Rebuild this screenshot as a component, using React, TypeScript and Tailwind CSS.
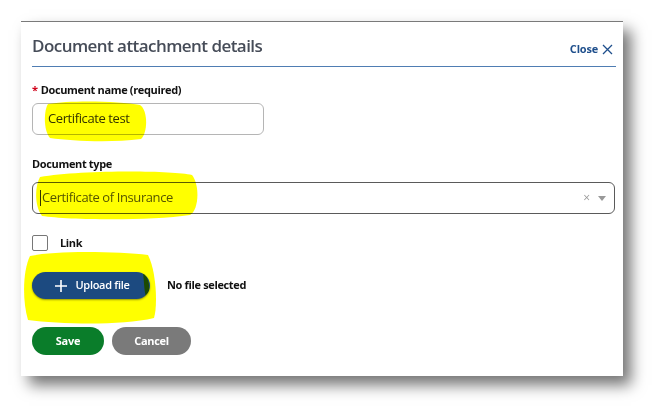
import React from "react";

export default function App() {
  const font = { fontFamily: '"Open Sans", "Liberation Sans", sans-serif' };
  return (
    <div className="relative w-[665px] h-[419px] bg-white overflow-hidden pt-[21px] pl-[21px]" style={font}>
      <div className="w-[602px] h-[355px] bg-white border-t border-[#7a7a7a] shadow-[8px_9px_14px_rgba(0,0,0,0.55)] pl-[11px] pr-[7px]">
        <div className="flex items-center justify-between h-[45px] border-b border-[#4f7db3] pt-[4px]">
          <h1 className="text-[17px] font-semibold text-[#464c58] tracking-[-0.55px]">Document attachment details</h1>
          <button className="flex items-center gap-[4px] text-[11px] font-bold text-[#1f4f8c] tracking-[-0.2px] pr-[3px] pt-[6px]">
            Close
            <svg width="11" height="11" viewBox="0 0 11 11" className="stroke-[#1f4f8c]" fill="none">
              <path d="M1 1L10 10M10 1L1 10" strokeWidth="1.3" />
            </svg>
          </button>
        </div>

        <div className="mt-[15px] flex items-center h-[16px] text-[11px] font-bold text-[#111] tracking-[-0.35px]">
          <span className="text-[#d0021b] mr-[3px]">*</span>
          Document name (required)
        </div>
        <div className="mt-[5px] w-[232px] h-[32px] border border-[#b5b5b5] rounded-[6px] flex items-center pl-[15px] text-[13px] text-[#333] tracking-[-0.4px]">
          Certificate test
        </div>

        <div className="mt-[21px] flex items-center h-[16px] text-[11px] font-bold text-[#111] tracking-[-0.35px]">Document type</div>
        <div className="mt-[10px] w-[583px] h-[32px] border-[1.5px] border-[#5a5a5a] rounded-[6px] flex items-center pl-[7px] pr-[8px]">
          <span className="w-px h-[16px] bg-[#333] mr-[1px]"></span>
          <span className="flex-1 text-[13px] text-[#555] tracking-[-0.4px]">Certificate of Insurance</span>
          <span className="text-[12px] text-[#999] mr-[8px] leading-none">×</span>
          <svg width="8" height="5" viewBox="0 0 8 5"><path d="M0 0H8L4 5Z" fill="#999" /></svg>
        </div>

        <div className="mt-[21px] flex items-center h-[16px]">
          <span className="w-[16px] h-[16px] border border-[#777] rounded-[2px]"></span>
          <span className="ml-[12px] text-[11px] font-bold text-[#111] tracking-[-0.35px]">Link</span>
        </div>

        <div className="mt-[21px] flex items-center">
          <button className="relative z-10 w-[118px] h-[27px] rounded-full bg-[#1c4a80] text-white text-[11px] font-semibold tracking-[-0.3px] flex items-center justify-center gap-[8px] pl-[3px] shadow-[0_1px_2px_rgba(0,0,0,0.4)]">
            <svg width="12" height="12" viewBox="0 0 12 12" fill="none" stroke="white" strokeWidth="1.6">
              <path d="M6 0V12M0 6H12" />
            </svg>
            Upload file
          </button>
          <span className="ml-[17px] text-[11px] font-bold text-[#111] tracking-[-0.35px]">No file selected</span>
        </div>

        <div className="mt-[28px] flex items-center gap-[8px]">
          <button className="w-[72px] h-[28px] rounded-full bg-[#0a7d2a] text-white text-[11px] font-bold tracking-[-0.3px]">Save</button>
          <button className="w-[79px] h-[28px] rounded-full bg-[#7a7a7a] text-white text-[11px] font-bold tracking-[-0.3px]">Cancel</button>
        </div>
      </div>

      <svg className="absolute left-0 top-0 z-[5] pointer-events-none" width="665" height="419" viewBox="0 0 665 419">
        <path d="M30,256 C60,250 120,252 148,255 C156,270 158,305 154,318 C120,326 60,324 28,320 C22,300 23,270 30,256 Z" fill="#ffff00" />
      </svg>
      <svg className="absolute left-0 top-0 z-20 mix-blend-multiply pointer-events-none" width="665" height="419" viewBox="0 0 665 419">
        <path d="M48,104 C70,100 120,101 140,105 C148,110 148,133 141,139 C110,143 72,141 50,138 C43,130 44,110 48,104 Z" fill="#ffff00" />
        <path d="M40,177 C80,170 170,170 192,175 C200,185 199,210 190,215 C150,221 70,220 42,216 C34,205 35,186 40,177 Z" fill="#ffff00" />
        <path d="M143,273 C149,276 152,292 146,297 C144,290 144,280 143,273 Z" fill="#ffff00" />
      </svg>
    </div>
  );
}
